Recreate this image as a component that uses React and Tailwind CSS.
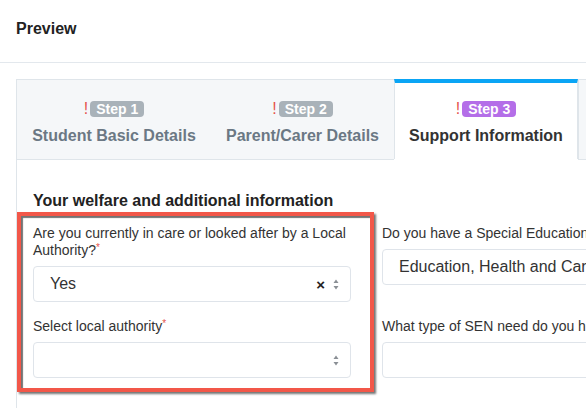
import React from "react";

const tabs = [
  { step: "Step 1", label: "Student Basic Details", width: "w-[194px]", active: false },
  { step: "Step 2", label: "Parent/Carer Details", width: "w-[183px]", active: false },
  { step: "Step 3", label: "Support Information", width: "w-[184px]", active: true },
];

function SelectArrows() {
  return (
    <svg width="6" height="11" viewBox="0 0 6 11" className="text-[#8a8f95]">
      <path d="M3 0.5 L5.5 4 L0.5 4 Z" fill="currentColor" />
      <path d="M3 10.5 L5.5 7 L0.5 7 Z" fill="currentColor" />
    </svg>
  );
}

function Field({ label, required, value, clearable, nowrap }) {
  return (
    <div className="flex flex-col">
      <label
        className={`text-[14px] leading-[17px] text-[#333] mb-[7px] ${
          nowrap ? "whitespace-nowrap" : ""
        }`}
      >
        {label}
        {required && (
          <span className="text-[#e5534b] text-[10px] leading-none relative -top-[4px]">*</span>
        )}
      </label>
      <div className="h-[36px] border border-[#dfe4ea] rounded-[4px] bg-white flex items-center pl-[16px] pr-[11px]">
        <span className="flex-1 text-[16px] text-[#333] whitespace-nowrap overflow-hidden">
          {value}
        </span>
        {clearable && (
          <span className="text-[#222] text-[15px] font-bold mr-[8px] leading-none">×</span>
        )}
        <SelectArrows />
      </div>
    </div>
  );
}

export default function App() {
  return (
    <div
      className="relative w-[586px] h-[408px] overflow-hidden bg-white"
      style={{ fontFamily: '"Liberation Sans", Arial, sans-serif' }}
    >
      <div className="h-[63px] border-b border-[#e3e8ed] px-4 flex items-center">
        <h1 className="text-[16px] font-bold text-[#222] -mt-[5px]">Preview</h1>
      </div>

      <div className="pl-4 pt-4">
        <div className="w-[640px] border-l border-t border-[#dfe5ea]">
          {/* tabs */}
          <div className="flex">
            {tabs.map((t) => (
              <div
                key={t.step}
                className={`${t.width} h-[80px] flex flex-col items-center ${
                  t.active
                    ? "bg-white border-t-[4px] border-t-[#0aa5f5] border-l border-l-[#dfe5ea] border-r border-r-[#dfe5ea] -mt-px pt-[18px]"
                    : "bg-[#f5f7f9] border-b border-[#dfe5ea] pt-[21px]"
                }`}
              >
                <div className="flex items-center gap-[2px] h-[16px]">
                  <span className="text-[#e5534b] text-[16px] leading-none font-normal">!</span>
                  <span
                    className={`${
                      t.active ? "bg-[#b46ee8]" : "bg-[#a9b2b9]"
                    } text-white text-[14px] font-bold leading-[16px] px-[6px] rounded-[4px]`}
                  >
                    {t.step}
                  </span>
                </div>
                <div
                  className={`mt-[9px] text-[16px] font-bold leading-[20px] whitespace-nowrap ${
                    t.active ? "text-[#333]" : "text-[#6b7884]"
                  }`}
                >
                  {t.label}
                </div>
              </div>
            ))}
            <div className="flex-1 h-[80px] bg-[#f5f7f9] border-b border-l border-[#dfe5ea]" />
          </div>

          {/* content */}
          <div className="pl-[16px] pt-[30px] h-[260px]">
            <h2 className="text-[16px] font-bold text-[#222] leading-[22px] mb-[13px]">
              Your welfare and additional information
            </h2>
            <div className="grid grid-cols-[318px_318px] gap-x-[31px] gap-y-[16px] items-start">
              <Field
                label="Are you currently in care or looked after by a Local Authority?"
                required
                value="Yes"
                clearable
              />
              <Field
                label="Do you have a Special Educational Needs (SEN)?"
                nowrap
                value="Education, Health and Care Plan"
              />
              <Field label="Select local authority" required value="" />
              <Field label="What type of SEN need do you have?" nowrap value="" />
            </div>
          </div>
        </div>
      </div>

      {/* annotation */}
      <div className="absolute left-[17px] top-[212px] w-[357px] h-[180px] border-[4px] border-[#f25749] shadow-[2px_2px_2px_rgba(0,0,0,0.55),inset_2px_2px_1px_rgba(0,0,0,0.55)]" />
    </div>
  );
}
